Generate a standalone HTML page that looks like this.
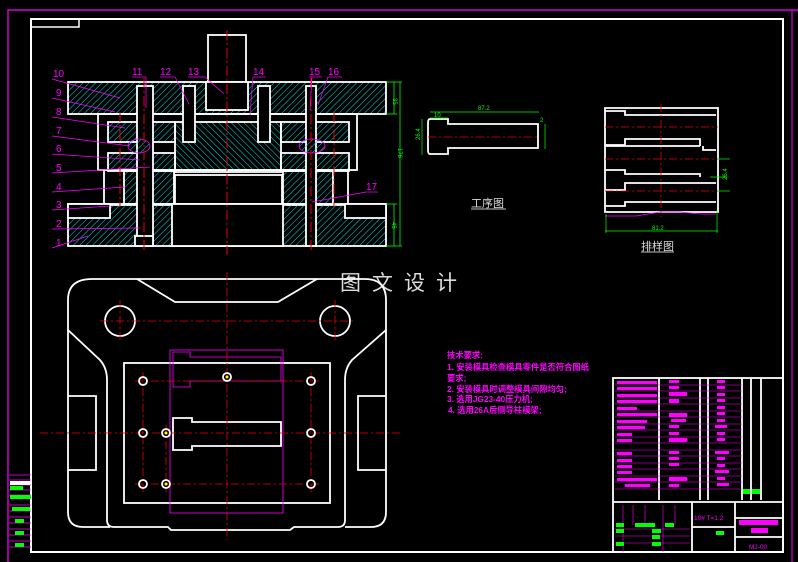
<!DOCTYPE html>
<html><head><meta charset="utf-8"><style>
html,body{margin:0;padding:0;background:#000;width:798px;height:562px;overflow:hidden}
svg{display:block}
text{font-family:"Liberation Sans","Noto Sans CJK SC",sans-serif}
</style></head><body>
<svg width="798" height="562" viewBox="0 0 798 562" xmlns="http://www.w3.org/2000/svg">
<defs>
<pattern id="h" width="4.5" height="4.5" patternUnits="userSpaceOnUse" patternTransform="rotate(45)">
<line x1="0" y1="0" x2="0" y2="4.5" stroke="#00e0e0" stroke-width="1"/>
</pattern>
<pattern id="h2" width="4.5" height="4.5" patternUnits="userSpaceOnUse" patternTransform="rotate(-45)">
<line x1="0" y1="0" x2="0" y2="4.5" stroke="#00e0e0" stroke-width="1"/>
</pattern>
</defs>
<polyline points="8,562 8,10 798,10" fill="none" stroke="#f0f" stroke-width="1.2"/>
<line x1="792" y1="10" x2="792" y2="562" stroke="#f0f" stroke-width="1"/>
<rect x="31" y="19" width="752" height="533" fill="none" stroke="#fff" stroke-width="2"/>
<rect x="31" y="19" width="48" height="8" fill="none" stroke="#fff" stroke-width="1.5"/>
<g stroke="#f0f" stroke-width="0.8">
<line x1="9" y1="475" x2="31" y2="475"/><line x1="9" y1="480" x2="31" y2="480"/><line x1="9" y1="485" x2="31" y2="485"/>
<line x1="9" y1="490" x2="31" y2="490"/><line x1="9" y1="495" x2="31" y2="495"/><line x1="9" y1="505" x2="31" y2="505"/>
<line x1="9" y1="511" x2="31" y2="511"/><line x1="9" y1="517" x2="31" y2="517"/><line x1="9" y1="523" x2="31" y2="523"/>
<line x1="9" y1="529" x2="31" y2="529"/><line x1="9" y1="535" x2="31" y2="535"/><line x1="9" y1="541" x2="31" y2="541"/><line x1="9" y1="547" x2="31" y2="547"/>
</g>
<g fill="#0f0"><rect x="10" y="486" width="13" height="4"/><rect x="10" y="495" width="21" height="4"/><rect x="12" y="507" width="18" height="4"/><rect x="15" y="519" width="9" height="4"/><rect x="15" y="531" width="9" height="4"/><rect x="15" y="543" width="9" height="4"/></g>
<rect x="10" y="481" width="20" height="4" fill="#fff"/>

<g stroke="#fff" stroke-width="1.8" fill="none">
<rect x="208" y="35" width="38" height="73" fill="#000"/>
<rect x="68" y="82" width="318" height="32" fill="url(#h)"/>
<rect x="98" y="114" width="259" height="56"/>
<rect x="175" y="122" width="106" height="50" fill="url(#h2)"/>
<rect x="108" y="122" width="67" height="20" fill="url(#h)"/>
<rect x="281" y="122" width="68" height="20" fill="url(#h)"/>
<rect x="108" y="153" width="67" height="18" fill="url(#h)"/>
<rect x="281" y="153" width="68" height="18" fill="url(#h)"/>
<rect x="104" y="170" width="244" height="35"/>
<rect x="124" y="171" width="50" height="33" fill="url(#h)"/>
<rect x="283" y="171" width="50" height="33" fill="url(#h)"/>
<rect x="175" y="175" width="107" height="30" fill="#000"/>
<rect x="68" y="204" width="318" height="42" fill="url(#h)"/>
<rect x="172" y="204" width="111" height="42" fill="#000"/>
<rect x="68" y="204" width="42" height="14" fill="#000"/>
<rect x="345" y="204" width="41" height="14" fill="#000"/>
<rect x="137" y="86" width="16" height="160" fill="#000"/>
<rect x="135" y="236" width="18" height="10" fill="#000"/>
<rect x="183" y="86" width="12" height="56" fill="#000"/>
<rect x="258" y="86" width="12" height="56" fill="#000"/>
<rect x="306" y="86" width="10" height="160" fill="#000"/>
<rect x="206" y="82" width="42" height="28" fill="#000"/>
</g>
<ellipse cx="139" cy="146" rx="11" ry="7" fill="url(#h)" stroke="#f0f" stroke-width="0.8"/>
<ellipse cx="312" cy="146" rx="13" ry="7" fill="url(#h)" stroke="#f0f" stroke-width="0.8"/>
<g stroke="#e00" stroke-width="1" stroke-dasharray="10,3,2,3">
<line x1="227" y1="30" x2="227" y2="255"/><line x1="144" y1="78" x2="144" y2="250"/><line x1="311" y1="78" x2="311" y2="250"/>
<line x1="120" y1="112" x2="120" y2="207"/><line x1="334" y1="112" x2="334" y2="207"/>
</g>
<g fill="#f0f" font-size="10">
<text x="53" y="77">10</text><text x="56" y="96">9</text><text x="56" y="115">8</text><text x="56" y="134">7</text><text x="56" y="152">6</text>
<text x="56" y="171">5</text><text x="56" y="190">4</text><text x="56" y="208">3</text><text x="56" y="227">2</text><text x="56" y="246">1</text>
<text x="132" y="75">11</text><text x="160" y="75">12</text><text x="188" y="75">13</text><text x="253" y="75">14</text><text x="309" y="75">15</text><text x="328" y="75">16</text><text x="366" y="190">17</text>
</g>
<g stroke="#f0f" stroke-width="0.7">
<line x1="52" y1="79" x2="120" y2="98"/><line x1="52" y1="98" x2="115" y2="112"/><line x1="52" y1="117" x2="125" y2="128"/>
<line x1="52" y1="136" x2="130" y2="146"/><line x1="52" y1="154" x2="140" y2="160"/><line x1="52" y1="173" x2="150" y2="167"/>
<line x1="52" y1="192" x2="125" y2="187"/><line x1="52" y1="210" x2="110" y2="206"/><line x1="52" y1="229" x2="140" y2="228"/><line x1="52" y1="248" x2="88" y2="236"/>
<line x1="132" y1="77" x2="146" y2="77"/><line x1="146" y1="77" x2="146" y2="108"/>
<line x1="160" y1="77" x2="175" y2="77"/><line x1="175" y1="77" x2="189" y2="104"/>
<line x1="188" y1="77" x2="205" y2="77"/><line x1="205" y1="77" x2="224" y2="94"/>
<line x1="253" y1="77" x2="266" y2="77"/><line x1="253" y1="77" x2="250" y2="115"/>
<line x1="309" y1="77" x2="322" y2="77"/><line x1="312" y1="77" x2="310" y2="110"/>
<line x1="328" y1="77" x2="342" y2="77"/><line x1="328" y1="77" x2="318" y2="105"/>
<line x1="366" y1="192" x2="378" y2="192"/><line x1="366" y1="192" x2="312" y2="202"/>
</g>
<g stroke="#0f0" stroke-width="0.8" fill="none">
<line x1="386" y1="82" x2="402" y2="82"/><line x1="386" y1="114" x2="397" y2="114"/><line x1="386" y1="204" x2="397" y2="204"/><line x1="386" y1="246" x2="402" y2="246"/>
<line x1="394" y1="82" x2="394" y2="114"/><line x1="394" y1="204" x2="394" y2="246"/><line x1="400" y1="82" x2="400" y2="246"/>
</g>
<g fill="#0f0" font-size="6"><text x="393" y="98" transform="rotate(90 393 98)">35</text><text x="398" y="148" transform="rotate(90 398 148)">176</text><text x="392" y="222" transform="rotate(90 392 222)">45</text></g>

<text x="340" y="290" font-size="21" fill="#ddd" letter-spacing="11" font-family="'Noto Serif CJK SC',serif">图文设计</text>

<g stroke="#fff" stroke-width="1.8" fill="none">
<path d="M92,279 H365 Q386,279 386,300 V330 L352,360 Q345,368 345,380 V520 Q345,527 338,527 H294 L290,530 H171 L168,527 H114 Q107,527 107,520 V380 Q107,368 100,360 L68,330 V300 Q68,279 92,279 Z"/>
<path d="M68,330 V512 Q68,527 83,527 H110"/>
<path d="M386,330 V512 Q386,527 371,527 H345"/>
<path d="M137,279 L175,302 H278 L317,279"/>
<rect x="124" y="363" width="206" height="140"/>
<circle cx="120" cy="321" r="15"/><circle cx="335" cy="321" r="15"/>
<path d="M68,396 H96 V470 H68"/><path d="M386,396 H358 V470 H386"/>
<path d="M173,418 H192 V422 H281 V446 H192 V450 H173 Z"/>
</g>
<g stroke="#f0f" stroke-width="0.8" fill="none">
<rect x="170" y="350" width="113" height="163"/>
<path d="M173,352 H190 V357 H281 V381 H190 V387 H173 Z"/>
</g>
<g stroke="#e00" stroke-width="0.8" stroke-dasharray="8,3,2,3">
<line x1="227" y1="272" x2="227" y2="540"/><line x1="40" y1="433" x2="400" y2="433"/>
<line x1="100" y1="321" x2="355" y2="321"/><line x1="120" y1="300" x2="120" y2="342"/><line x1="335" y1="300" x2="335" y2="342"/>
<line x1="135" y1="381" x2="320" y2="381"/><line x1="135" y1="484" x2="320" y2="484"/>
<line x1="143" y1="372" x2="143" y2="492"/><line x1="311" y1="372" x2="311" y2="492"/><line x1="166" y1="425" x2="166" y2="492"/>
</g>
<g stroke="#fff" stroke-width="1.8" fill="none">
<circle cx="143" cy="381" r="4"/><circle cx="143" cy="433" r="4"/><circle cx="143" cy="484" r="4"/>
<circle cx="311" cy="381" r="4"/><circle cx="311" cy="433" r="4"/><circle cx="311" cy="484" r="4"/>
<circle cx="227" cy="377" r="4"/><circle cx="166" cy="433" r="4"/><circle cx="166" cy="484" r="4"/>
</g>
<g fill="#ff0"><circle cx="227" cy="377" r="1.5"/><circle cx="166" cy="433" r="1.5"/><circle cx="166" cy="484" r="1.5"/></g>

<g stroke="#fff" stroke-width="1.8" fill="none">
<path d="M430,119 H448 V124 H538 V148 H448 V154 H430 Q428,154 428,150 V123 Q428,119 430,119 Z"/>
</g>
<line x1="428" y1="137" x2="540" y2="137" stroke="#e00" stroke-width="0.8" stroke-dasharray="8,3,2,3"/>
<g stroke="#0f0" stroke-width="0.7" fill="none"><line x1="430" y1="112" x2="539" y2="112"/><line x1="422" y1="119" x2="422" y2="155"/><line x1="545" y1="124" x2="545" y2="149"/><line x1="430" y1="118" x2="448" y2="118"/></g>
<g fill="#0f0" font-size="6"><text x="478" y="110">87.2</text><text x="434" y="117">10</text><text x="420" y="140" transform="rotate(-90 420 140)">26.4</text><text x="540" y="122">2</text></g>
<text x="471" y="207" font-size="11" fill="#ddd">工序图</text>
<line x1="471" y1="209" x2="506" y2="209" stroke="#fff" stroke-width="0.8"/>

<g stroke="#fff" stroke-width="1.8" fill="none">
<path d="M605,108 H718 V212 H605 Z"/>
<path d="M605,111 H625 V115 H716 M605,145 H625 V139 H700 V146 M605,146 H700 M703,146 V150 H716 M605,170 H625 V174 H700 V177 M605,190 H625 V183 H716 M605,206 H625 V202 H716"/>
</g>
<g stroke="#e00" stroke-width="0.8" stroke-dasharray="8,3,2,3"><line x1="661" y1="104" x2="661" y2="217"/><line x1="605" y1="127" x2="718" y2="127"/><line x1="605" y1="159" x2="718" y2="159"/><line x1="605" y1="191" x2="718" y2="191"/></g>
<polyline points="605,216 636,216 648,214 660,212 680,212 700,214 716,214" fill="none" stroke="#f0f" stroke-width="0.8"/>
<g stroke="#0f0" stroke-width="0.7" fill="none"><line x1="605" y1="231" x2="718" y2="231"/><line x1="606" y1="214" x2="606" y2="233"/><line x1="717" y1="210" x2="717" y2="233"/><line x1="718" y1="159" x2="730" y2="159"/><line x1="718" y1="191" x2="730" y2="191"/><line x1="710" y1="177" x2="727" y2="177"/></g>
<g fill="#0f0" font-size="6"><text x="652" y="230">81.2</text><text x="727" y="180" transform="rotate(-90 727 180)">26.4</text></g>
<text x="641" y="250" font-size="11" fill="#ddd">排样图</text>
<line x1="641" y1="252" x2="674" y2="252" stroke="#fff" stroke-width="0.8"/>

<g fill="#f0f" font-size="8.3" font-weight="bold" font-family="'Liberation Sans','Noto Sans CJK SC',sans-serif">
<text x="447" y="358">技术要求:</text>
<text x="447" y="370">1. 安装模具检查模具零件是否符合图纸</text>
<text x="447" y="381">要求;</text>
<text x="447" y="392">2. 安装模具时调整模具间隙均匀;</text>
<text x="447" y="402">3. 选用JG23-40压力机;</text>
<text x="448" y="413">4. 选用26A后侧导柱模架;</text>
</g>

<g stroke="#fff" stroke-width="1.8" fill="none">
<rect x="613" y="378" width="170" height="174"/>
<line x1="613" y1="502" x2="783" y2="502"/>
<line x1="659" y1="378" x2="659" y2="500"/><line x1="700" y1="378" x2="700" y2="500"/><line x1="708" y1="378" x2="708" y2="500"/>
<line x1="742" y1="378" x2="742" y2="500"/><line x1="751" y1="378" x2="751" y2="500"/><line x1="761" y1="378" x2="761" y2="500"/>
<line x1="692" y1="502" x2="692" y2="552"/><line x1="735" y1="502" x2="735" y2="552"/>
<line x1="735" y1="518" x2="783" y2="518"/><line x1="735" y1="537" x2="783" y2="537"/>
<line x1="692" y1="527" x2="735" y2="527"/>
</g>
<g stroke="#f0f" stroke-width="0.6">
<line x1="615" y1="385" x2="742" y2="385"/><line x1="615" y1="391" x2="742" y2="391"/><line x1="615" y1="398" x2="742" y2="398"/>
<line x1="615" y1="404" x2="742" y2="404"/><line x1="615" y1="411" x2="742" y2="411"/><line x1="615" y1="417" x2="742" y2="417"/>
<line x1="615" y1="424" x2="742" y2="424"/><line x1="615" y1="430" x2="742" y2="430"/><line x1="615" y1="437" x2="742" y2="437"/>
<line x1="615" y1="443" x2="742" y2="443"/><line x1="615" y1="450" x2="742" y2="450"/><line x1="615" y1="456" x2="742" y2="456"/>
<line x1="615" y1="463" x2="742" y2="463"/><line x1="615" y1="469" x2="742" y2="469"/><line x1="615" y1="476" x2="742" y2="476"/>
<line x1="615" y1="482" x2="742" y2="482"/><line x1="615" y1="489" x2="742" y2="489"/>
<line x1="623" y1="505" x2="623" y2="552"/><line x1="633" y1="505" x2="633" y2="525"/><line x1="645" y1="505" x2="645" y2="525"/><line x1="663" y1="505" x2="663" y2="552"/><line x1="675" y1="505" x2="675" y2="525"/>
<line x1="615" y1="529" x2="690" y2="529"/><line x1="615" y1="536" x2="690" y2="536"/><line x1="615" y1="543" x2="690" y2="543"/>
</g>
<g fill="#f0f">
<rect x="617" y="381" width="40" height="3"/><rect x="617" y="387" width="40" height="3"/><rect x="617" y="394" width="40" height="3"/><rect x="617" y="400" width="40" height="3"/>
<rect x="617" y="407" width="20" height="3"/><rect x="617" y="413" width="40" height="3"/><rect x="617" y="420" width="30" height="3"/><rect x="617" y="426" width="28" height="3"/>
<rect x="617" y="433" width="15" height="3"/><rect x="617" y="439" width="15" height="3"/><rect x="617" y="452" width="15" height="3"/><rect x="617" y="459" width="15" height="3"/>
<rect x="617" y="465" width="15" height="3"/><rect x="617" y="471" width="15" height="3"/><rect x="617" y="478" width="40" height="3"/><rect x="625" y="484" width="25" height="3"/>
<rect x="669" y="380" width="10" height="3"/><rect x="669" y="386" width="10" height="3"/><rect x="669" y="392" width="18" height="4"/><rect x="669" y="399" width="10" height="4"/>
<rect x="669" y="413" width="18" height="4"/><rect x="671" y="419" width="15" height="3"/><rect x="669" y="425" width="10" height="3"/><rect x="669" y="432" width="10" height="3"/>
<rect x="669" y="438" width="18" height="4"/><rect x="669" y="451" width="10" height="3"/><rect x="669" y="457" width="10" height="3"/><rect x="669" y="463" width="10" height="3"/>
<rect x="669" y="477" width="18" height="4"/><rect x="669" y="484" width="10" height="3"/>
<rect x="717" y="380" width="8" height="3"/><rect x="717" y="386" width="8" height="3"/><rect x="717" y="393" width="8" height="3"/><rect x="717" y="399" width="8" height="3"/>
<rect x="717" y="406" width="8" height="3"/><rect x="717" y="412" width="8" height="3"/><rect x="717" y="419" width="8" height="3"/><rect x="715" y="425" width="12" height="3"/>
<rect x="717" y="432" width="8" height="3"/><rect x="717" y="438" width="8" height="3"/><rect x="715" y="451" width="14" height="3"/><rect x="717" y="457" width="8" height="3"/>
<rect x="717" y="464" width="8" height="3"/><rect x="715" y="470" width="14" height="3"/><rect x="717" y="477" width="8" height="3"/><rect x="717" y="483" width="12" height="3"/>
<rect x="739" y="520" width="39" height="5"/><rect x="751" y="528" width="17" height="5"/>
</g>
<g fill="#0f0">
<rect x="743" y="489" width="7" height="5"/><rect x="752" y="489" width="8" height="5"/>
<rect x="616" y="523" width="8" height="4"/><rect x="635" y="523" width="20" height="4"/><rect x="665" y="523" width="9" height="4"/>
<rect x="616" y="529" width="8" height="4"/><rect x="652" y="529" width="9" height="4"/><rect x="616" y="542" width="8" height="4"/><rect x="652" y="542" width="9" height="4"/>
<rect x="652" y="535" width="8" height="4"/><rect x="716" y="531" width="8" height="4"/>
</g>
<text x="694" y="520" font-size="6.5" fill="#f0f">10# T=1.2</text>
<text x="749" y="549" font-size="6.5" fill="#f0f">MJ-00</text>
</svg>
</body></html>
